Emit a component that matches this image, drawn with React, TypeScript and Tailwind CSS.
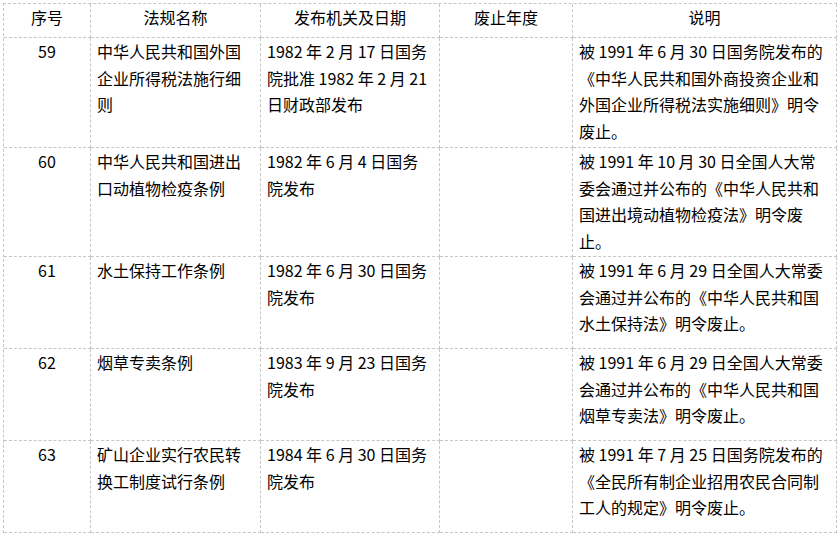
import React from "react";

type Row = {
  no: string;
  name: string[];
  pub: string[];
  year: string[];
  note: string[];
  h: string;
};

const rows: Row[] = [
  {
    no: "59",
    name: ["中华人民共和国外国", "企业所得税法施行细", "则"],
    pub: ["1982 年 2 月 17 日国务", "院批准 1982 年 2 月 21", "日财政部发布"],
    year: [],
    note: [
      "被 1991 年 6 月 30 日国务院发布的",
      "《中华人民共和国外商投资企业和",
      "外国企业所得税法实施细则》明令",
      "废止。",
    ],
    h: "h-[110px]",
  },
  {
    no: "60",
    name: ["中华人民共和国进出", "口动植物检疫条例"],
    pub: ["1982 年 6 月 4 日国务", "院发布"],
    year: [],
    note: [
      "被 1991 年 10 月 30 日全国人大常",
      "委会通过并公布的《中华人民共和",
      "国进出境动植物检疫法》明令废",
      "止。",
    ],
    h: "h-[109px]",
  },
  {
    no: "61",
    name: ["水土保持工作条例"],
    pub: ["1982 年 6 月 30 日国务", "院发布"],
    year: [],
    note: [
      "被 1991 年 6 月 29 日全国人大常委",
      "会通过并公布的《中华人民共和国",
      "水土保持法》明令废止。",
    ],
    h: "h-[92px]",
  },
  {
    no: "62",
    name: ["烟草专卖条例"],
    pub: ["1983 年 9 月 23 日国务", "院发布"],
    year: [],
    note: [
      "被 1991 年 6 月 29 日全国人大常委",
      "会通过并公布的《中华人民共和国",
      "烟草专卖法》明令废止。",
    ],
    h: "h-[92px]",
  },
  {
    no: "63",
    name: ["矿山企业实行农民转", "换工制度试行条例"],
    pub: ["1984 年 6 月 30 日国务", "院发布"],
    year: [],
    note: [
      "被 1991 年 7 月 25 日国务院发布的",
      "《全民所有制企业招用农民合同制",
      "工人的规定》明令废止。",
    ],
    h: "h-[92px]",
  },
];

const cell =
  "border-r border-b border-dashed border-[#c6c6c6] whitespace-nowrap";

function Lines({ lines }: { lines: string[] }) {
  return (
    <>
      {lines.map((l, i) => (
        <div key={i}>{l}</div>
      ))}
    </>
  );
}

export default function App() {
  return (
    <div className="w-[840px] h-[536px] bg-white pt-[3px] pl-[3px] overflow-hidden">
      <div
        className="grid grid-cols-[87px_170px_179px_133px_264px] w-[834px] border-l border-t border-dashed border-[#c6c6c6] text-[16px] leading-[26.67px] text-black"
        style={{ fontFamily: '"Noto Sans CJK SC", "Noto Sans", sans-serif' }}
      >
        {["序号", "法规名称", "发布机关及日期", "废止年度", "说明"].map((t) => (
          <div key={t} className={`${cell} h-[34px] text-center`}>
            {t}
          </div>
        ))}
        {rows.map((r) => (
          <React.Fragment key={r.no}>
            <div className={`${cell} ${r.h} text-center`}>{r.no}</div>
            <div className={`${cell} ${r.h} pl-[6px]`}>
              <Lines lines={r.name} />
            </div>
            <div className={`${cell} ${r.h} pl-[6px]`}>
              <Lines lines={r.pub} />
            </div>
            <div className={`${cell} ${r.h} pl-[6px]`}>
              <Lines lines={r.year} />
            </div>
            <div className={`${cell} ${r.h} pl-[6px]`}>
              <Lines lines={r.note} />
            </div>
          </React.Fragment>
        ))}
      </div>
    </div>
  );
}
